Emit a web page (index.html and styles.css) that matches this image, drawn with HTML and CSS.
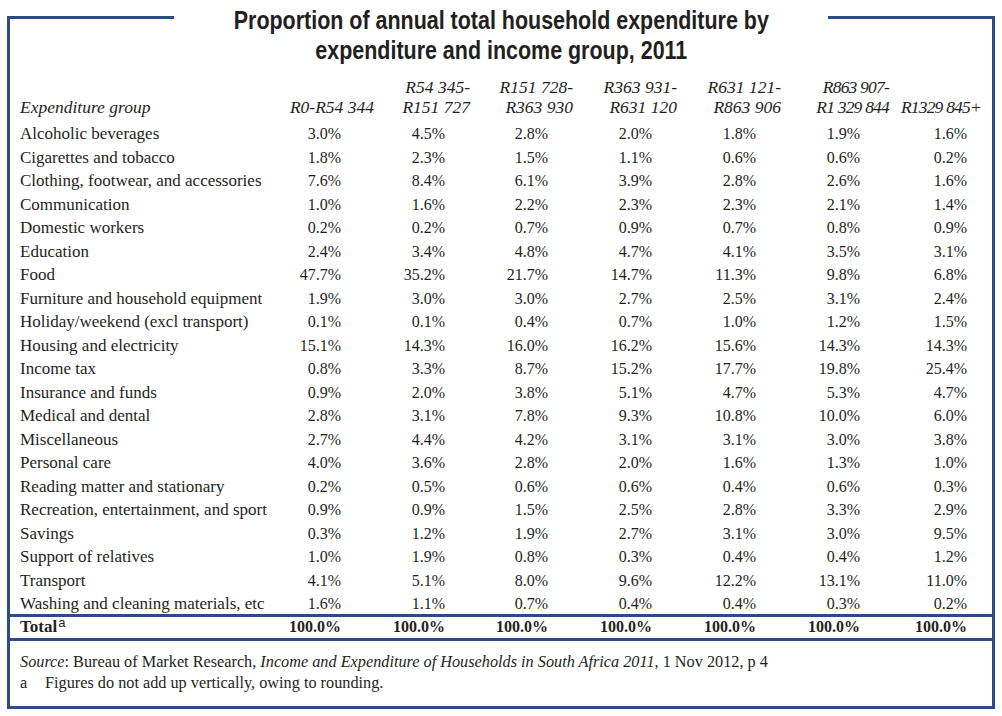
FILE: index.html
```html
<!DOCTYPE html>
<html>
<head>
<meta charset="utf-8">
<link rel="stylesheet" href="styles.css">
</head>
<body>
<div class="frame">
  <div class="top">
    <div class="seg seg-left"></div>
    <h1 class="title"><span class="title-text">Proportion of annual total household expenditure by<br>expenditure and income group, 2011</span></h1>
    <div class="seg seg-right"></div>
  </div>
  <div class="box">
    <table class="data">
      <colgroup>
        <col class="c-label"><col class="c1"><col class="c2"><col class="c3"><col class="c4"><col class="c5"><col class="c6"><col class="c7">
      </colgroup>
      <thead>
        <tr>
          <th class="lbl">Expenditure group</th>
          <th>R0-R54 344</th>
          <th>R54 345-<br>R151 727</th>
          <th>R151 728-<br>R363 930</th>
          <th>R363 931-<br>R631 120</th>
          <th>R631 121-<br>R863 906</th>
          <th class="tight">R863 907-<br>R1 329 844</th>
          <th class="tight">R1329 845+</th>
        </tr>
      </thead>
      <tbody>
        <tr><td>Alcoholic beverages</td><td>3.0%</td><td>4.5%</td><td>2.8%</td><td>2.0%</td><td>1.8%</td><td>1.9%</td><td>1.6%</td></tr>
        <tr><td>Cigarettes and tobacco</td><td>1.8%</td><td>2.3%</td><td>1.5%</td><td>1.1%</td><td>0.6%</td><td>0.6%</td><td>0.2%</td></tr>
        <tr><td>Clothing, footwear, and accessories</td><td>7.6%</td><td>8.4%</td><td>6.1%</td><td>3.9%</td><td>2.8%</td><td>2.6%</td><td>1.6%</td></tr>
        <tr><td>Communication</td><td>1.0%</td><td>1.6%</td><td>2.2%</td><td>2.3%</td><td>2.3%</td><td>2.1%</td><td>1.4%</td></tr>
        <tr><td>Domestic workers</td><td>0.2%</td><td>0.2%</td><td>0.7%</td><td>0.9%</td><td>0.7%</td><td>0.8%</td><td>0.9%</td></tr>
        <tr><td>Education</td><td>2.4%</td><td>3.4%</td><td>4.8%</td><td>4.7%</td><td>4.1%</td><td>3.5%</td><td>3.1%</td></tr>
        <tr><td>Food</td><td>47.7%</td><td>35.2%</td><td>21.7%</td><td>14.7%</td><td>11.3%</td><td>9.8%</td><td>6.8%</td></tr>
        <tr><td>Furniture and household equipment</td><td>1.9%</td><td>3.0%</td><td>3.0%</td><td>2.7%</td><td>2.5%</td><td>3.1%</td><td>2.4%</td></tr>
        <tr><td>Holiday/weekend (excl transport)</td><td>0.1%</td><td>0.1%</td><td>0.4%</td><td>0.7%</td><td>1.0%</td><td>1.2%</td><td>1.5%</td></tr>
        <tr><td>Housing and electricity</td><td>15.1%</td><td>14.3%</td><td>16.0%</td><td>16.2%</td><td>15.6%</td><td>14.3%</td><td>14.3%</td></tr>
        <tr><td>Income tax</td><td>0.8%</td><td>3.3%</td><td>8.7%</td><td>15.2%</td><td>17.7%</td><td>19.8%</td><td>25.4%</td></tr>
        <tr><td>Insurance and funds</td><td>0.9%</td><td>2.0%</td><td>3.8%</td><td>5.1%</td><td>4.7%</td><td>5.3%</td><td>4.7%</td></tr>
        <tr><td>Medical and dental</td><td>2.8%</td><td>3.1%</td><td>7.8%</td><td>9.3%</td><td>10.8%</td><td>10.0%</td><td>6.0%</td></tr>
        <tr><td>Miscellaneous</td><td>2.7%</td><td>4.4%</td><td>4.2%</td><td>3.1%</td><td>3.1%</td><td>3.0%</td><td>3.8%</td></tr>
        <tr><td>Personal care</td><td>4.0%</td><td>3.6%</td><td>2.8%</td><td>2.0%</td><td>1.6%</td><td>1.3%</td><td>1.0%</td></tr>
        <tr><td>Reading matter and stationary</td><td>0.2%</td><td>0.5%</td><td>0.6%</td><td>0.6%</td><td>0.4%</td><td>0.6%</td><td>0.3%</td></tr>
        <tr><td>Recreation, entertainment, and sport</td><td>0.9%</td><td>0.9%</td><td>1.5%</td><td>2.5%</td><td>2.8%</td><td>3.3%</td><td>2.9%</td></tr>
        <tr><td>Savings</td><td>0.3%</td><td>1.2%</td><td>1.9%</td><td>2.7%</td><td>3.1%</td><td>3.0%</td><td>9.5%</td></tr>
        <tr><td>Support of relatives</td><td>1.0%</td><td>1.9%</td><td>0.8%</td><td>0.3%</td><td>0.4%</td><td>0.4%</td><td>1.2%</td></tr>
        <tr><td>Transport</td><td>4.1%</td><td>5.1%</td><td>8.0%</td><td>9.6%</td><td>12.2%</td><td>13.1%</td><td>11.0%</td></tr>
        <tr><td>Washing and cleaning materials, etc</td><td>1.6%</td><td>1.1%</td><td>0.7%</td><td>0.4%</td><td>0.4%</td><td>0.3%</td><td>0.2%</td></tr>
      </tbody>
      <tfoot>
        <tr class="total"><td>Total<sup class="note">a</sup></td><td>100.0%</td><td>100.0%</td><td>100.0%</td><td>100.0%</td><td>100.0%</td><td>100.0%</td><td>100.0%</td></tr>
      </tfoot>
    </table>
    <div class="foot">
      <p><em>Source</em>: Bureau of Market Research, <em>Income and Expenditure of Households in South Africa 2011</em>, 1 Nov 2012, p 4</p>
      <p><span class="fn-mark">a</span>Figures do not add up vertically, owing to rounding.</p>
    </div>
  </div>
</div>
</body>
</html>
```

FILE: styles.css
```css
html, body {
  margin: 0;
  padding: 0;
  background: #ffffff;
}

body {
  color: #231f20;
  font-family: "Liberation Serif", "Times New Roman", serif;
}

.frame {
  width: 988px;
  margin-left: 7px;
}

.top {
  display: flex;
  align-items: stretch;
}

.seg {
  flex: 1 1 0;
  margin-top: 16px;
  border-top: 3px solid #2b4a86;
}

.seg-left {
  border-left: 3px solid #2b4a86;
}

.seg-right {
  border-right: 3px solid #2b4a86;
}

.title {
  flex: 0 0 654px;
  display: flex;
  justify-content: center;
  margin: 0;
  padding-top: 5px;
  text-align: center;
  font-family: "Liberation Sans", Arial, sans-serif;
  font-weight: bold;
  font-size: 26px;
  line-height: 30px;
  color: #231f20;
}

.title-text {
  flex: 0 0 auto;
  white-space: nowrap;
  transform: scaleX(0.825);
}

.box {
  border-left: 3px solid #2b4a86;
  border-right: 3px solid #2b4a86;
  border-bottom: 3px solid #2b4a86;
  padding-top: 12px;
}

.data {
  width: 982px;
  table-layout: fixed;
  border-collapse: separate;
  border-spacing: 0;
  font-size: 16px;
}

.c-label { width: 276px; }
.c1 { width: 88px; }
.c2 { width: 96px; }
.c3 { width: 103px; }
.c4 { width: 104px; }
.c5 { width: 104px; }
.c6 { width: 108px; }
.c7 { width: 103px; }

.data th {
  font-style: italic;
  font-weight: normal;
  font-size: 17.5px;
  text-align: right;
  vertical-align: bottom;
  line-height: 20px;
  padding: 0 0 3px 0;
  white-space: nowrap;
}

.data th.tight {
  letter-spacing: -0.8px;
}

.data th.lbl {
  text-align: left;
  padding-left: 10px;
}

.data th:last-child {
  padding-right: 11px;
}

.data td {
  text-align: right;
  line-height: 19.5px;
  padding: 4px 25px 0 0;
  white-space: nowrap;
}

.data td:first-child {
  text-align: left;
  padding-left: 10px;
  padding-right: 0;
  font-size: 17px;
}

.data td:nth-child(2) { padding-right: 33px; }
.data td:nth-child(7) { padding-right: 29px; }

.total td {
  font-weight: bold;
  border-top: 3px solid #2b4a86;
  border-bottom: 3px solid #2b4a86;
  line-height: 20px;
  padding-top: 0;
  padding-bottom: 1px;
}

.note {
  font-family: "Liberation Sans", Arial, sans-serif;
  font-weight: normal;
  font-size: 13px;
  line-height: 0;
  vertical-align: 5px;
  margin-left: 1px;
}

.foot {
  padding: 11px 0 12px 10px;
  font-size: 16.25px;
  line-height: 21px;
}

.foot p {
  margin: 0;
}

.fn-mark {
  display: inline-block;
  width: 25px;
}
```
